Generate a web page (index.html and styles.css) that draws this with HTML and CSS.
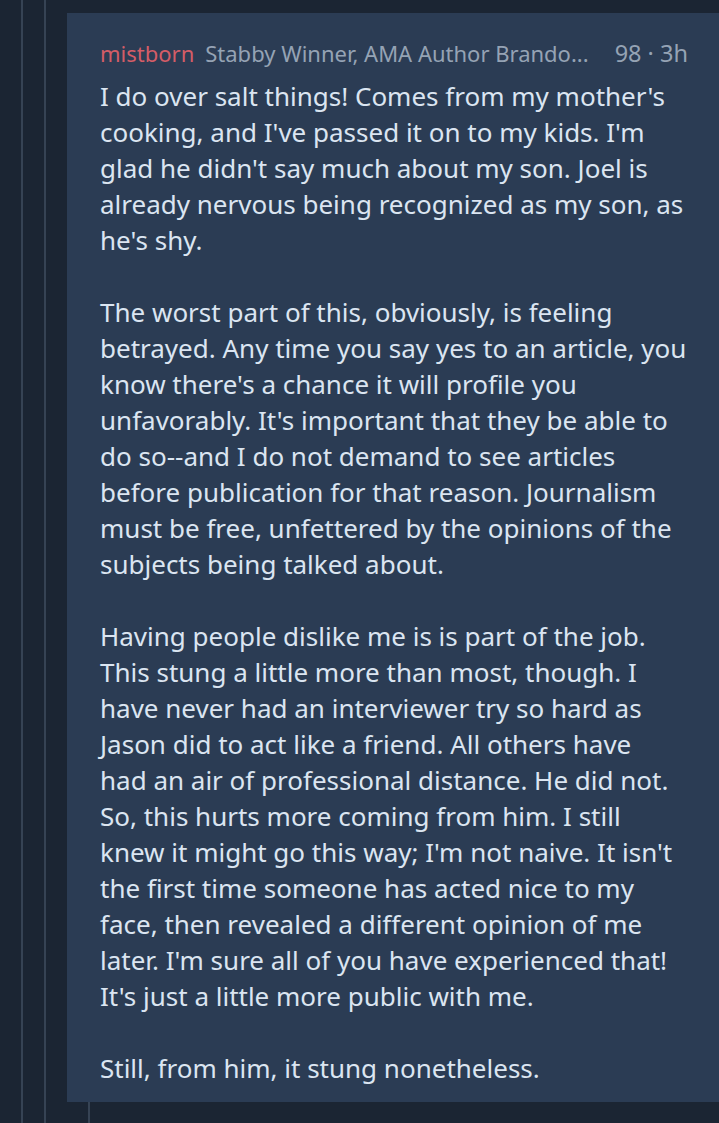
FILE: index.html
```html
<!DOCTYPE html>
<html>
<head>
<meta charset="utf-8">
<link rel="stylesheet" href="styles.css">
</head>
<body>
<div class="rail rail-1">
  <div class="rail rail-2">
    <article class="comment">
      <header class="meta">
        <span class="author">mistborn</span>
        <span class="flair">Stabby Winner, AMA Author Brando...</span>
        <span class="score">98 · 3h</span>
      </header>
      <div class="body">
        <p>I do over salt things! Comes from my mother's<br>cooking, and I've passed it on to my kids. I'm<br>glad he didn't say much about my son. Joel is<br>already nervous being recognized as my son, as<br>he's shy.</p>
        <p>The worst part of this, obviously, is feeling<br>betrayed. Any time you say yes to an article, you<br>know there's a chance it will profile you<br>unfavorably. It's important that they be able to<br>do so--and I do not demand to see articles<br>before publication for that reason. Journalism<br>must be free, unfettered by the opinions of the<br>subjects being talked about.</p>
        <p>Having people dislike me is is part of the job.<br>This stung a little more than most, though. I<br>have never had an interviewer try so hard as<br>Jason did to act like a friend. All others have<br>had an air of professional distance. He did not.<br>So, this hurts more coming from him. I still<br>knew it might go this way; I'm not naive. It isn't<br>the first time someone has acted nice to my<br>face, then revealed a different opinion of me<br>later. I'm sure all of you have experienced that!<br>It's just a little more public with me.</p>
        <p>Still, from him, it stung nonetheless.</p>
      </div>
    </article>
    <div class="replies"></div>
  </div>
</div>
</body>
</html>
```

FILE: styles.css
```css
html, body {
  margin: 0;
  padding: 0;
  background: #1b2533;
  height: 100%;
  overflow: hidden;
}
body {
  font-family: "Noto Sans", "Open Sans", sans-serif;
}
.rail {
  display: flex;
  flex-direction: column;
  border-left: 2px solid #364354;
  box-sizing: border-box;
}
.rail-1 {
  margin-left: 21px;
  padding-left: 21px;
  min-height: 100vh;
}
.rail-2 {
  padding-left: 21px;
  flex: 1;
  padding-top: 13px;
}
.comment {
  background: #2b3c54;
  padding: 25px 31px 16px 33px;
}
.meta {
  display: flex;
  align-items: baseline;
  font-size: 22px;
  line-height: 30px;
  color: #95a3b4;
  white-space: nowrap;
}
.author {
  color: #d45d67;
  margin-right: 11px;
}
.score {
  margin-left: auto;
  font-size: 23.5px;
}
.body {
  margin-top: 10px;
  color: #dbe5f1;
  font-size: 26px;
  line-height: 36px;
  white-space: nowrap;
}
.body p {
  margin: 0 0 36px 0;
}
.body p:last-child {
  margin-bottom: 0;
}
.replies {
  flex: 1;
  margin-left: 21px;
  border-left: 2px solid #364354;
}
```
